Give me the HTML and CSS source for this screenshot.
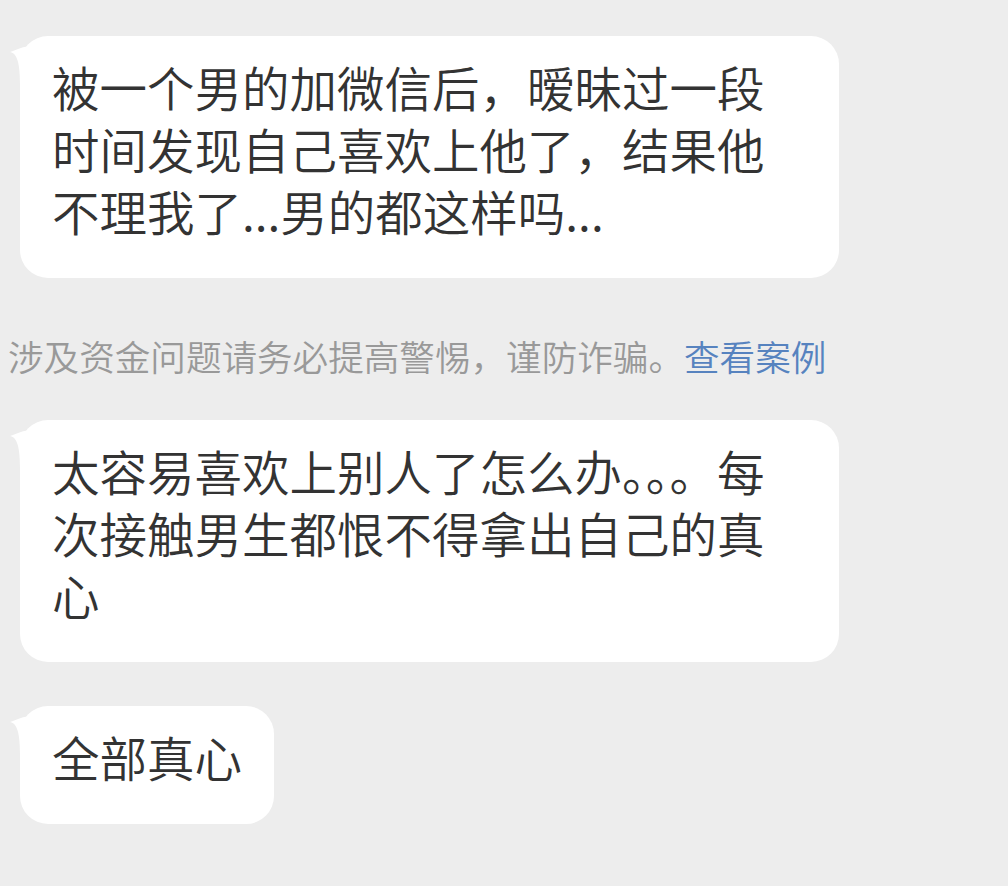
FILE: index.html
```html
<!DOCTYPE html>
<html>
<head>
  <meta charset="UTF-8">
  <title>Chat</title>
  <link rel="stylesheet" href="styles.css">
</head>
<body>
  <div class="chat">
    <div class="bubble">
      <svg class="tail" width="24" height="40" viewBox="0 0 24 40"><path d="M2 8 C8 9, 12 16, 12 40 L24 40 L24 2 C16 2, 8 6, 2 8 Z" fill="#fff"/></svg>
      被一个男的加微信后，暧昧过一段时间发现自己喜欢上他了，结果他不理我了...男的都这样吗...
    </div>

    <p class="notice">涉及资金问题请务必提高警惕，谨防诈骗。<span class="notice-link">查看案例</span></p>

    <div class="bubble">
      <svg class="tail" width="24" height="40" viewBox="0 0 24 40"><path d="M2 8 C8 9, 12 16, 12 40 L24 40 L24 2 C16 2, 8 6, 2 8 Z" fill="#fff"/></svg>
      太容易喜欢上别人了怎么办。。。每次接触男生都恨不得拿出自己的真心
    </div>

    <div class="bubble">
      <svg class="tail" width="24" height="40" viewBox="0 0 24 40"><path d="M2 8 C8 9, 12 16, 12 40 L24 40 L24 2 C16 2, 8 6, 2 8 Z" fill="#fff"/></svg>
      全部真心
    </div>
  </div>
</body>
</html>
```

FILE: styles.css
```css
:root {
  --bg: #ededed;
  --bubble: #ffffff;
  --text-dark: #333333;
  --text-gray: #999999;
  --link-blue: #5783bf;
}

body {
  margin: 0;
  background: var(--bg);
  font-family: "Noto Sans CJK SC", "Noto Sans", sans-serif;
  width: 1008px;
  height: 886px;
  overflow: hidden;
}

.chat {
  display: flex;
  flex-direction: column;
  align-items: flex-start;
  padding: 36px 0 0 8px;
}

.bubble {
  position: relative;
  margin-left: 12px;
  max-width: 755px;
  padding: 20px 32px 36px;
  background: var(--bubble);
  border-radius: 28px;
  color: var(--text-dark);
  font-size: 47.5px;
  font-weight: 350;
  line-height: 62px;
  word-break: break-all;
}

.tail {
  position: absolute;
  left: -12px;
  top: 8px;
}

.notice {
  margin: 56px 0 42px;
  font-size: 35.6px;
  font-weight: 350;
  line-height: 44px;
  color: var(--text-gray);
  white-space: nowrap;
}

.notice-link {
  color: var(--link-blue);
}

.bubble + .bubble {
  margin-top: 44px;
}
```
